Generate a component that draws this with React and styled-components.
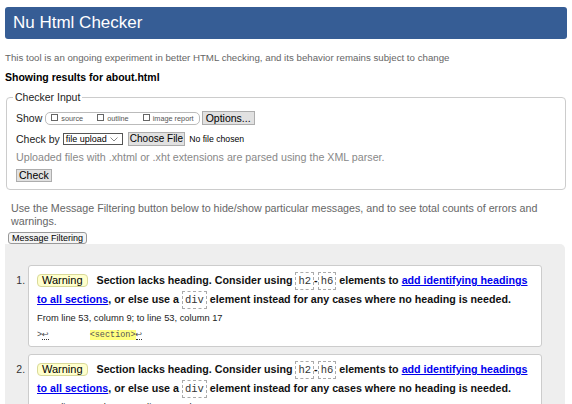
import React from "react";
import styled, { createGlobalStyle } from "styled-components";

const GlobalStyle = createGlobalStyle`
  body {
    margin: 0;
    background: #fff;
    color: #000;
    font-family: "Liberation Sans", Arial, sans-serif;
    font-size: 10.5px;
  }
`;

const Page = styled.div`
  padding: 7px 5px 0 5px;
`;

const Header = styled.h1`
  margin: 0;
  height: 32px;
  padding: 0 8px;
  line-height: 32px;
  background: #365d95;
  border-radius: 3px;
  color: #fff;
  font-size: 17px;
  font-weight: normal;
`;

const Intro = styled.p`
  margin: 12px 0 0;
  line-height: 13px;
  font-size: 9.7px;
  color: #666;
`;

const ResultsFor = styled.p`
  margin: 7px 0 0;
  line-height: 13px;
  font-weight: bold;
`;

const Fieldset = styled.fieldset`
  min-width: 0;
  margin: 7px 1px 0;
  padding: 0 9px 7px;
  border: 1px solid #ccc;
  border-radius: 4px;
`;

const Legend = styled.legend`
  margin-left: -3px;
  padding: 0 2px;
  line-height: 13px;
  color: #222;
`;

const Row = styled.div`
  display: flex;
  align-items: center;
  gap: 3px;
  height: 14px;
  margin-top: ${(p) => p.$top}px;
  color: #222;
`;

const ShowGroup = styled.span`
  display: inline-flex;
  align-items: center;
  height: 11px;
  padding: 0 5px;
  border: 1px solid #bbb;
  border-radius: 5px;
`;

const Option = styled.label`
  display: inline-flex;
  align-items: center;
  gap: 3px;
  margin-left: ${(p) => (p.$first ? 0 : 14)}px;
  font-size: 7.3px;
  color: #555;
`;

const Box = styled.input.attrs({ type: "checkbox" })`
  appearance: none;
  width: 7px;
  height: 7px;
  margin: 0 0 2px;
  border: 1px solid #666;
  background: #fff;
`;

const Button = styled.button`
  height: ${(p) => p.$h || 14}px;
  margin-left: ${(p) => p.$ml || 0}px;
  padding: 0 ${(p) => p.$px ?? 3}px;
  background: #e1e1e1;
  border: 1px solid #adadad;
  border-radius: 0;
  color: #000;
  font-family: inherit;
  font-size: ${(p) => p.$fs || 10.5}px;
  line-height: 1;
`;

const Select = styled.span`
  display: inline-flex;
  align-items: center;
  justify-content: space-between;
  box-sizing: border-box;
  width: 60px;
  height: 12px;
  padding: 0 4px 0 2px;
  border: 1px solid #555;
  background: #fff;
  font-size: 9px;
  color: #000;
`;

const NoFile = styled.span`
  margin-left: 1px;
  font-size: 8.7px;
  color: #000;
`;

const Note = styled.p`
  margin: ${(p) => p.$m};
  line-height: 13px;
  font-size: 10.7px;
  color: ${(p) => p.$c || "#666"};
`;

const FilterButton = styled.button`
  display: block;
  height: 12px;
  margin: 4px 0 0 3px;
  padding: 0 3px;
  background: #f4f4f4;
  border: 1px solid #999;
  border-radius: 3px;
  color: #000;
  font-family: inherit;
  font-size: 9px;
  line-height: 1;
`;

const Results = styled.div`
  margin-right: 2px;
  min-height: 170px;
  background: #eee;
  border-radius: 0 5px 0 0;
`;

const List = styled.ol`
  margin: 0;
  padding: 21px 23px 0 23px;
`;

const Message = styled.li`
  margin-bottom: 7px;
  padding: 5px 8px 5px;
  background: #fff;
  border: 1px solid #ccc;
  border-radius: 3px;

  &::marker {
    color: #333;
    font-size: 10.5px;
  }
`;

const MessageText = styled.p`
  margin: 0;
  line-height: 19px;
  font-size: 10.7px;
  font-weight: bold;
  color: #111;
`;

const Badge = styled.strong`
  display: inline-block;
  margin-right: 6px;
  padding: 0 4px;
  line-height: 11px;
  background: #ffffcc;
  border: 1px solid #d9d99a;
  border-radius: 4px;
  font-size: 11px;
  font-weight: normal;
  color: #000;
`;

const Code = styled.code`
  display: inline-block;
  padding: 0 2px;
  line-height: 16px;
  border: 1px dashed #aaa;
  font-family: "Liberation Mono", "DejaVu Sans Mono", monospace;
  font-size: 10.5px;
  font-weight: normal;
  color: #333;
`;

const Link = styled.a`
  color: #00e;
  text-decoration: underline;
`;

const Location = styled.p`
  margin: 3px 0 0;
  line-height: 12px;
  font-size: 9.3px;
  color: #222;
`;

const Extract = styled.p`
  margin: 5px 0 0;
  line-height: 12px;
  white-space: pre;
  font-family: "Liberation Mono", "DejaVu Sans Mono", monospace;
  font-size: 8.5px;
  color: #444;
`;

const LineFeed = styled.span`
  border-bottom: 1px dotted #333;
  font-family: "DejaVu Sans", sans-serif;
  font-size: 8px;
`;

const Mark = styled.mark`
  background: #ffff80;
  color: #555;
`;

const Chevron = () => (
  <svg width="8" height="5" viewBox="0 0 8 5">
    <polyline points="0.5,0.5 4,4 7.5,0.5" fill="none" stroke="#888" strokeWidth="1" />
  </svg>
);

const messages = [53, 56];

const App = () => (
  <Page>
    <GlobalStyle />
    <Header>Nu Html Checker</Header>
    <Intro>
      This tool is an ongoing experiment in better HTML checking, and its behavior remains subject to change
    </Intro>
    <ResultsFor>Showing results for about.html</ResultsFor>

    <Fieldset>
      <Legend>Checker Input</Legend>
      <Row $top={7}>
        <span>Show</span>
        <ShowGroup>
          <Option $first>
            <Box />
            source
          </Option>
          <Option>
            <Box />
            outline
          </Option>
          <Option>
            <Box />
            image report
          </Option>
        </ShowGroup>
        <Button $ml={-1}>Options...</Button>
      </Row>
      <Row $top={7}>
        <span>Check by</span>
        <Select>
          file upload
          <Chevron />
        </Select>
        <Button $ml={2} $px={1} $fs={10}>Choose File</Button>
        <NoFile>No file chosen</NoFile>
      </Row>
      <Note $m="5px 0 0" $c="#888">
        Uploaded files with .xhtml or .xht extensions are parsed using the XML parser.
      </Note>
      <Row $top={4}>
        <Button $h={13} $px={2}>Check</Button>
      </Row>
    </Fieldset>

    <Note $m="12px 0 0 6px">
      Use the Message Filtering button below to hide/show particular messages, and to see total counts of errors and
      warnings.
    </Note>
    <FilterButton>Message Filtering</FilterButton>

    <Results>
      <List>
        {messages.map((line) => (
          <Message key={line}>
            <MessageText>
              <Badge>Warning</Badge> Section lacks heading. Consider using <Code>h2</Code>-<Code>h6</Code> elements to{" "}
              <Link href="#">add identifying headings to all sections</Link>, or else use a <Code>div</Code> element
              instead for any cases where no heading is needed.
            </MessageText>
            <Location>
              From line {line}, column 9; to line {line}, column 17
            </Location>
            <Extract>
              {">"}
              <LineFeed>↩</LineFeed>
              {"        "}
              <Mark>{"<section>"}</Mark>
              <LineFeed>↩</LineFeed>
            </Extract>
          </Message>
        ))}
      </List>
    </Results>
  </Page>
);

export default App;
